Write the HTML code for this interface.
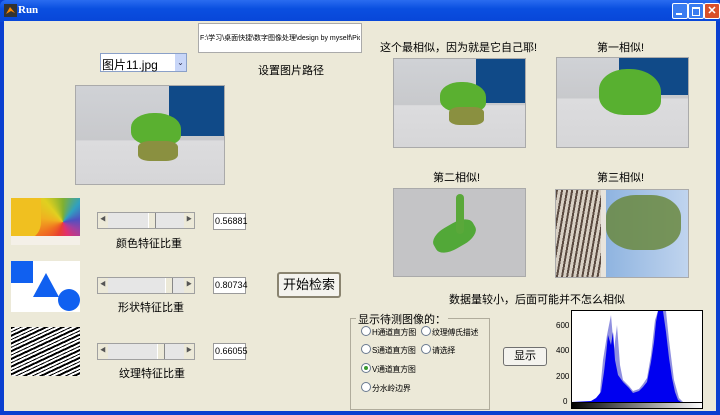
<!DOCTYPE html>
<html><head><meta charset="utf-8"><style>
body{margin:0;width:720px;height:415px;overflow:hidden;background:#0a3fd0;font-family:"Liberation Sans","Noto Sans CJK SC",sans-serif;}
.win{position:absolute;left:0;top:0;width:720px;height:415px;}
.title{position:absolute;left:0;top:0;width:720px;height:22px;background:linear-gradient(#2a6cf0,#0a4fe0 40%,#0846d8);border-radius:6px 6px 0 0;}
.client{position:absolute;left:4px;top:21px;width:712px;height:390px;background:#ece9d8;}
.a{position:absolute;}
.t{position:absolute;font-size:11px;color:#000;white-space:nowrap;}
.img{position:absolute;border:1px solid #aaa;overflow:hidden;}
.sl{position:absolute;width:98px;height:17px;background:#e6e6e6;border:1px solid #a0a0a0;box-sizing:border-box;}
.sl .ar{position:absolute;top:0;width:10px;height:15px;background:#ece9d8;font-size:6px;line-height:15px;text-align:center;color:#555;}
.sl .th{position:absolute;top:0;width:6px;height:15px;background:#ece9d8;border-left:1px solid #fff;border-right:1px solid #888;}
.ed{position:absolute;width:33px;height:17px;background:#fff;border:1px solid #9a9a9a;box-sizing:border-box;font-size:9px;line-height:15px;padding-left:1px;}
.rd{position:absolute;font-size:8px;white-space:nowrap;letter-spacing:-0.3px}
.rd i{display:inline-block;width:8px;height:8px;border:1px solid #6a7a90;border-radius:50%;background:#fff;vertical-align:-1px;margin-right:1px;position:relative;}
</style></head><body><div class="win">
<div class="title"><svg class="a" style="left:4px;top:4px" width="13" height="13"><rect width="13" height="13" fill="#333"/><path d="M2 10 L6 3 L11 9 L7 7Z" fill="#f80"/></svg>
<div class="t" style="left:18px;top:4px;color:#fff;font-family:'Liberation Serif',serif;font-weight:bold;font-size:11px">Run</div>
<div class="a" style="left:672px;top:3px;width:14px;height:14px;background:#3a7cf0;border:1px solid #fff;border-radius:2px"><div class="a" style="left:3px;top:9px;width:6px;height:2px;background:#fff"></div></div>
<div class="a" style="left:688px;top:3px;width:14px;height:14px;background:#3a7cf0;border:1px solid #fff;border-radius:2px"><div class="a" style="left:3px;top:3px;width:6px;height:6px;border:1px solid #fff;border-top-width:2px"></div></div>
<div class="a" style="left:704px;top:3px;width:14px;height:14px;background:#d8502a;border:1px solid #fff;border-radius:2px;color:#fff;font-size:11px;line-height:14px;text-align:center;font-weight:bold">✕</div>
</div>
<div class="client"></div>
<div class="a" style="left:198px;top:23px;width:164px;height:30px;background:#fff;border:1px solid #aaa;box-sizing:border-box;"></div>
<div class="t" style="left:200px;top:33px;font-size:7px;width:160px;overflow:hidden">F:\学习\桌面快捷\数字图像处理\design by myself\Pic\</div>
<div class="a" style="left:100px;top:53px;width:87px;height:19px;background:#fff;border:1px solid #8aa0c8;box-sizing:border-box"></div>
<div class="t" style="left:102px;top:56px;font-size:12px">图片11.jpg</div>
<div class="a" style="left:175px;top:54px;width:11px;height:17px;background:#c8d6f8;font-size:8px;text-align:center;line-height:17px;color:#335">⌄</div>
<div class="t" style="left:258px;top:62px;font-size:11px">设置图片路径</div>
<div class="img" style="left:75px;top:85px;width:148px;height:98px;background:linear-gradient(#d0d2d6 0,#c8c9cc 55%,#dcdcde 56%,#d6d6d8);"><div class="a" style="left:93px;top:0;width:55px;height:50px;background:#104a88"></div><div class="a" style="left:55px;top:27px;width:50px;height:32px;background:#5ab030;border-radius:45% 50% 30% 40%"></div><div class="a" style="left:62px;top:55px;width:40px;height:20px;background:#8a9040;border-radius:30%"></div></div>
<div class="t" style="left:380px;top:39px;font-size:11px">这个最相似，因为就是它自己耶!</div>
<div class="t" style="left:597px;top:39px;font-size:11px">第一相似!</div>
<div class="t" style="left:433px;top:169px;font-size:11px">第二相似!</div>
<div class="t" style="left:597px;top:169px;font-size:11px">第三相似!</div>
<div class="img" style="left:393px;top:58px;width:131px;height:88px;background:linear-gradient(#d0d2d6 0,#c8c9cc 52%,#dcdcde 53%,#d6d6d8);"><div class="a" style="left:82px;top:0;width:49px;height:44px;background:#104a88"></div><div class="a" style="left:46px;top:23px;width:46px;height:30px;background:#5ab030;border-radius:45% 50% 30% 40%"></div><div class="a" style="left:55px;top:48px;width:35px;height:18px;background:#8a9040;border-radius:30%"></div></div>
<div class="img" style="left:556px;top:57px;width:131px;height:89px;background:linear-gradient(#d0d2d6 0,#c8c9cc 45%,#dcdcde 46%,#d6d6d8);"><div class="a" style="left:62px;top:0;width:69px;height:37px;background:#104a88"></div><div class="a" style="left:42px;top:11px;width:62px;height:46px;background:#58b030;border-radius:45% 50% 30% 40%"></div></div>
<div class="img" style="left:393px;top:188px;width:131px;height:87px;background:#c4c4c6"><div class="a" style="left:38px;top:35px;width:45px;height:24px;background:#52a838;border-radius:40%;transform:rotate(-30deg)"></div><div class="a" style="left:62px;top:5px;width:8px;height:40px;background:#5aa83a;border-radius:5px"></div></div>
<div class="img" style="left:555px;top:189px;width:132px;height:87px;background:linear-gradient(90deg,#e8e4dc 0,#e8e4dc 38%,#8fb4e0 38%,#c0d4ee)"><div class="a" style="left:0;top:0;width:45px;height:87px;background:repeating-linear-gradient(100deg,#5a4a40 0 2px,#d8d0c4 2px 5px)"></div><div class="a" style="left:50px;top:5px;width:75px;height:55px;background:#6a8840;border-radius:40%;opacity:.85"></div></div>
<div class="img" style="left:11px;top:198px;width:69px;height:47px;border:none;background:conic-gradient(from 200deg at 52px 24px,#e84030,#f07020,#f0b020,#e0d020,#80b030,#30a0c0,#5050c0,#a040a0,#e03070,#e84030)"><div class="a" style="left:0;top:0;width:30px;height:40px;background:#f0c020;border-radius:0 0 40% 0"></div><div class="a" style="left:0;top:38px;width:69px;height:9px;background:#f4f0e8"></div></div>
<div class="a" style="left:11px;top:261px;width:69px;height:51px;background:#fff"><div class="a" style="left:0;top:0;width:22px;height:22px;background:#1060f0"></div><svg class="a" style="left:22px;top:12px" width="26" height="24"><path d="M13 0 L26 24 L0 24Z" fill="#1060f0"/></svg><div class="a" style="left:47px;top:28px;width:22px;height:22px;background:#1060f0;border-radius:50%"></div></div>
<div class="a" style="left:11px;top:327px;width:69px;height:49px;background:repeating-linear-gradient(155deg,#000 0 2px,#fff 2px 4px,#000 4px 5px,#fff 5px 7px)"></div>
<div class="sl" style="left:97px;top:212px"><div class="ar" style="left:0">◀</div><div class="th" style="left:50px"></div><div class="ar" style="right:0">▶</div></div>
<div class="sl" style="left:97px;top:277px"><div class="ar" style="left:0">◀</div><div class="th" style="left:67px"></div><div class="ar" style="right:0">▶</div></div>
<div class="sl" style="left:97px;top:343px"><div class="ar" style="left:0">◀</div><div class="th" style="left:59px"></div><div class="ar" style="right:0">▶</div></div>
<div class="t" style="left:116px;top:235px;font-size:11px">颜色特征比重</div>
<div class="t" style="left:118px;top:299px;font-size:11px">形状特征比重</div>
<div class="t" style="left:119px;top:365px;font-size:11px">纹理特征比重</div>
<div class="ed" style="left:213px;top:213px">0.56881</div>
<div class="ed" style="left:213px;top:277px">0.80734</div>
<div class="ed" style="left:213px;top:343px">0.66055</div>
<div class="a" style="left:277px;top:272px;width:64px;height:26px;background:#f4f3ee;border:2px solid #8a8470;border-radius:3px;box-sizing:border-box;font-size:13px;text-align:center;line-height:22px">开始检索</div>
<div class="t" style="left:449px;top:291px;font-size:11px">数据量较小，后面可能并不怎么相似</div>
<div class="a" style="left:350px;top:318px;width:140px;height:92px;border:1px solid #b0ac9c;box-sizing:border-box"></div>
<div class="t" style="left:356px;top:311px;font-size:11px;background:#ece9d8;padding:0 2px">显示待测图像的：</div>
<div class="rd" style="left:361px;top:326px"><i></i>H通道直方图</div>
<div class="rd" style="left:421px;top:326px"><i></i>纹理傅氏描述</div>
<div class="rd" style="left:361px;top:344px"><i></i>S通道直方图</div>
<div class="rd" style="left:421px;top:344px"><i></i>请选择</div>
<div class="rd" style="left:361px;top:363px"><i><b style="position:absolute;left:2px;top:2px;width:4px;height:4px;border-radius:50%;background:#3a9a30"></b></i>V通道直方图</div>
<div class="rd" style="left:361px;top:382px"><i></i>分水岭边界</div>
<div class="a" style="left:503px;top:347px;width:44px;height:19px;background:#f4f3ee;border:1px solid #707070;border-radius:3px;box-sizing:border-box;font-size:11px;text-align:center;line-height:17px">显示</div>
<div class="t" style="left:556px;top:321px;font-size:8px">600</div>
<div class="t" style="left:556px;top:346px;font-size:8px">400</div>
<div class="t" style="left:556px;top:372px;font-size:8px">200</div>
<div class="t" style="left:563px;top:397px;font-size:8px">0</div>
<svg class="a" style="left:571px;top:310px" width="133" height="100">
<defs><linearGradient id="g"><stop offset="0" stop-color="#000"/><stop offset="1" stop-color="#fff"/></linearGradient></defs>
<rect x="0.5" y="0.5" width="131" height="92" fill="#fff" stroke="#000"/>
<polygon fill="#9090e0" points="28,92 32,50 36,25 40,5 43,40 46,15 49,55 52,70 58,76 62,81 68,79 72,74 76,68 80,45 84,10 87,1 95,1 98,30 103,70 108,88 112,92"/>
<polygon fill="#0000f0" points="1,92 20,91 25,88 30,82 33,62 35,45 37,25 40,35 42,22 44,50 47,65 52,72 58,78 62,83 68,81 72,77 76,72 80,52 83,32 85,12 87,1 92,1 95,22 98,48 101,68 104,82 107,90 110,92"/>
<rect x="0.5" y="92.5" width="131" height="6" fill="url(#g)" stroke="#000"/>
</svg>
</div></body></html>
